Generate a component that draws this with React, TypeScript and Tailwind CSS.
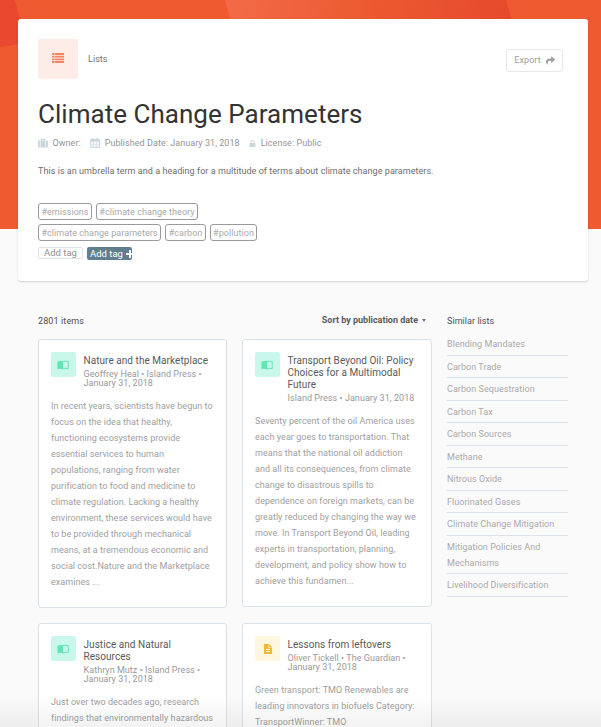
import React from 'react';
import { FaShare, FaSuitcase, FaLock } from 'react-icons/fa';

function BookIcon() {
  return (
    <svg viewBox="0 0 12 10" className="-ml-px h-[10px] w-[12px]">
      <path d="M0.5 1.5Q3.2 .4 6 1.3V9.4Q3.2 8.4 .5 9.2z" fill="#5fe6b4" />
      <path d="M6 1.6Q8.6 .6 11.2 1.6V8.6Q8.6 7.9 6 9" fill="none" stroke="#5fe6b4" strokeWidth="1" />
    </svg>
  );
}

function DocIcon() {
  return (
    <svg viewBox="0 0 16 20" className="h-[10px] w-[8px]">
      <path d="M0 0h10l6 6v14H0z" fill="#ecbb33" />
      <path d="M9.5 1v6H15" fill="none" stroke="#fff8e4" strokeWidth="1.2" />
      <path d="M4 11h8M4 15h8" stroke="#fff8e4" strokeWidth="2" />
    </svg>
  );
}

function ListIcon() {
  return (
    <svg viewBox="0 0 12 10" className="-mt-[2px] h-[10px] w-[12px]" fill="#f5835f">
      <path d="M0 0h2.3v1.9H0zM2.8 0H12v1.9H2.8zM0 2.7h2.3v1.9H0zM2.8 2.7H12v1.9H2.8zM0 5.4h2.3v1.9H0zM2.8 5.4H12v1.9H2.8zM0 8.1h2.3V10H0zM2.8 8.1H12V10H2.8z" />
    </svg>
  );
}

function CalendarIcon() {
  return (
    <svg viewBox="0 0 10 10" className="mr-[4.5px] ml-[9.5px] size-[10px]">
      <path d="M.5 1.5h9v8h-9z" fill="#f1f5f7" stroke="#cfdae0" />
      <path d="M.5 1.5h9v2h-9zM2 0h1.5v2H2zM6.5 0H8v2H6.500z" fill="#c8d5dc" />
      <path d="M3.500 3.500v6M6.500 3.500v6M.5 6.500h9" stroke="#d8e1e6" strokeWidth=".7" />
    </svg>
  );
}

type CardProps = {
  title: string[];
  meta: string[];
  body: string[];
  kind?: 'book' | 'doc';
  className: string;
};

function Card({ title, meta, body, kind = 'book', className }: CardProps) {
  return (
    <article className={`rounded-[3px] border border-[#dce3e8] bg-white px-3 pt-3 whitespace-nowrap ${className}`}>
      <div className="flex gap-[7.5px]">
        <div
          className={`flex size-[25px] shrink-0 items-center justify-center rounded-[2px] ${
            kind === 'book' ? 'bg-[#c9f7ec]' : 'bg-[#fff6df]'
          }`}
        >
          {kind === 'book' ? <BookIcon /> : <DocIcon />}
        </div>
        <div className="pt-[3px]">
          <h3 className="text-[10px] leading-[12px] tracking-[0.05px] text-[#5a5a5a]">
            {title.map((t) => (
              <div key={t}>{t}</div>
            ))}
          </h3>
          <div className="pt-[3px] text-[9px] leading-[9px] tracking-[0.05px] text-[#999]">
            {meta.map((t) => (
              <div key={t}>{t}</div>
            ))}
          </div>
        </div>
      </div>
      <div className="pt-[10px] text-[9px] leading-4 tracking-[0.05px] text-[#a0a0a0]">
        {body.map((t) => (
          <div key={t}>{t}</div>
        ))}
      </div>
    </article>
  );
}

function Tag({ label, className }: { label: string; className: string }) {
  return (
    <span
      className={`flex h-[17px] items-center justify-center rounded-[3px] border border-[#9a9a9e] pt-[2px] text-[9px] tracking-[0.05px] text-[#aaa] ${className}`}
    >
      {label}
    </span>
  );
}

const similar = [
  ['Blending Mandates'],
  ['Carbon Trade'],
  ['Carbon Sequestration'],
  ['Carbon Tax'],
  ['Carbon Sources'],
  ['Methane'],
  ['Nitrous Oxide'],
  ['Fluorinated Gases'],
  ['Climate Change Mitigation'],
  ['Mitigation Policies And', 'Mechanisms'],
  ['Livelihood Diversification'],
];

export default function App() {
  return (
    <div className="relative isolate h-[727px] w-[601px] overflow-hidden bg-[#fafafa] px-[18px] pt-[19px] font-['Roboto',sans-serif] whitespace-nowrap">
      <svg className="absolute top-0 left-0 -z-10 h-[229px] w-[601px]" viewBox="0 0 601 229">
        <defs>
          <linearGradient id="shade" x1="226" y1="0" x2="500" y2="60" gradientUnits="userSpaceOnUse">
            <stop offset="0" stopColor="#f26b48" />
            <stop offset="0.5" stopColor="#ec5a30" />
            <stop offset="1" stopColor="#e64a2c" />
          </linearGradient>
        </defs>
        <path d="M0 0h601v229H0z" fill="#f05a30" />
        <path d="M0 0h15l5 19v25l-20 3z" fill="#e8492f" />
        <path d="M225 0h281l7 24H232z" fill="url(#shade)" />
      </svg>

      <section className="h-[262px] w-[570px] rounded-[3px] bg-white px-5 pt-5 shadow-[0_1px_2px_rgba(0,0,0,0.16)]">
        <div className="flex items-start justify-between pr-[5px]">
          <div className="flex items-center gap-[10px]">
            <div className="flex size-10 items-center justify-center rounded-[2px] bg-[#fdece7]">
              <ListIcon />
            </div>
            <span className="pt-px text-[9px] tracking-[0.05px] text-[#707070]">Lists</span>
          </div>
          <button className="mt-[10px] flex h-[23px] w-[57px] items-center justify-center gap-[5px] rounded-[3px] border border-[#e8e8e8] text-[9px] tracking-[0.05px] text-[#a0a0a0]">
            Export
            <FaShare className="size-[9px]" />
          </button>
        </div>

        <h1 className="mt-[18px] h-[34px] text-[26px] leading-[34px] tracking-[0.03px] text-[#333]">
          Climate Change Parameters
        </h1>

        <div className="mt-[4px] flex h-4 items-center text-[9px] leading-4 tracking-[0.05px] text-[#959595]">
          <FaSuitcase className="mr-[4.5px] size-[10px] text-[#cbd8de]" />
          Owner:
          <CalendarIcon />
          Published Date: January 31, 2018
          <FaLock className="mr-[5px] ml-[9px] size-[7px] text-[#cdd7dc]" />
          License: Public
        </div>

        <p className="mt-3 text-[9px] leading-4 tracking-[0.05px] text-[#6e6e6e]">
          This is an umbrella term and a heading for a multitude of terms about climate change parameters.
        </p>

        <div className="mt-6 flex gap-1">
          <Tag label="#emissions" className="w-[54px]" />
          <Tag label="#climate change theory" className="w-[102px]" />
        </div>
        <div className="mt-1 flex gap-1">
          <Tag label="#climate change parameters" className="w-[123px]" />
          <Tag label="#carbon" className="w-[41px]" />
          <Tag label="#pollution" className="w-[47px]" />
        </div>
        <div className="mt-[6px] flex gap-1 text-[9.5px] leading-[10px]">
          <span className="flex h-3 w-[45px] items-center justify-center rounded-[2px] border border-[#dbe5ea] text-[#909090]">
            Add tag
          </span>
          <span className="flex h-[13px] w-[45px] items-center justify-between overflow-hidden rounded-[2px] bg-[#5f7f8f] pl-[3px] text-white">
            Add tag
            <svg viewBox="0 0 6 8" className="h-2 w-[6px] shrink-0" fill="#fff">
              <path d="M0 3h3V0h2v3h1v2H5v3H3V5H0z" />
            </svg>
          </span>
        </div>
      </section>

      <div className="flex pt-8 pl-5">
        <main className="w-[394px]">
          <div className="flex h-[26px] justify-between pr-[6px] text-[9px] leading-4 tracking-[0.12px] text-[#505050]">
            <span>2801 items</span>
            <span className="-mt-px flex items-center gap-1 self-start font-bold tracking-[0px] text-[#5a5a5a]">
              Sort by publication date
              <svg viewBox="0 0 4 3" className="h-[3px] w-1" fill="#777">
                <path d="M0 0h4L2 3z" />
              </svg>
            </span>
          </div>
          <div className="flex gap-[15px]">
            <div className="flex w-[189px] flex-col gap-[15px]">
              <Card
                className="h-[269px]"
                title={['Nature and the Marketplace']}
                meta={['Geoffrey Heal • Island Press •', 'January 31, 2018']}
                body={[
                  'In recent years, scientists have begun to',
                  'focus on the idea that healthy,',
                  'functioning ecosystems provide',
                  'essential services to human',
                  'populations, ranging from water',
                  'purification to food and medicine to',
                  'climate regulation. Lacking a healthy',
                  'environment, these services would have',
                  'to be provided through mechanical',
                  'means, at a tremendous economic and',
                  'social cost.Nature and the Marketplace',
                  'examines ...',
                ]}
              />
              <Card
                className="h-[269px]"
                title={['Justice and Natural', 'Resources']}
                meta={['Kathryn Mutz • Island Press •', 'January 31, 2018']}
                body={['Just over two decades ago, research', 'findings that environmentally hazardous']}
              />
            </div>
            <div className="flex w-[190px] flex-col gap-4">
              <Card
                className="h-[268px]"
                title={['Transport Beyond Oil: Policy', 'Choices for a Multimodal', 'Future']}
                meta={['Island Press • January 31, 2018']}
                body={[
                  'Seventy percent of the oil America uses',
                  'each year goes to transportation. That',
                  'means that the national oil addiction',
                  'and all its consequences, from climate',
                  'change to disastrous spills to',
                  'dependence on foreign markets, can be',
                  'greatly reduced by changing the way we',
                  'move. In Transport Beyond Oil, leading',
                  'experts in transportation, planning,',
                  'development, and policy show how to',
                  'achieve this fundamen...',
                ]}
              />
              <Card
                className="h-[269px]"
                kind="doc"
                title={['Lessons from leftovers']}
                meta={['Oliver Tickell • The Guardian •', 'January 31, 2018']}
                body={[
                  'Green transport: TMO Renewables are',
                  'leading innovators in biofuels Category:',
                  'TransportWinner: TMO',
                ]}
              />
            </div>
          </div>
        </main>
        <aside className="ml-[15px] w-[121px] text-[9px] leading-4 tracking-[0.05px]">
          <h2 className="h-5 text-[#505050]">Similar lists</h2>
          <ul>
            {similar.map((lines) => (
              <li key={lines[0]} className="border-b border-[#dde3e8] pt-[3px] pb-[2.5px] text-[#aaa]">
                {lines.map((l) => (
                  <div key={l}>{l}</div>
                ))}
              </li>
            ))}
          </ul>
        </aside>
      </div>

      <div className="absolute bottom-0 left-0 h-8 w-full bg-linear-to-b from-transparent to-black/5" />
    </div>
  );
}
